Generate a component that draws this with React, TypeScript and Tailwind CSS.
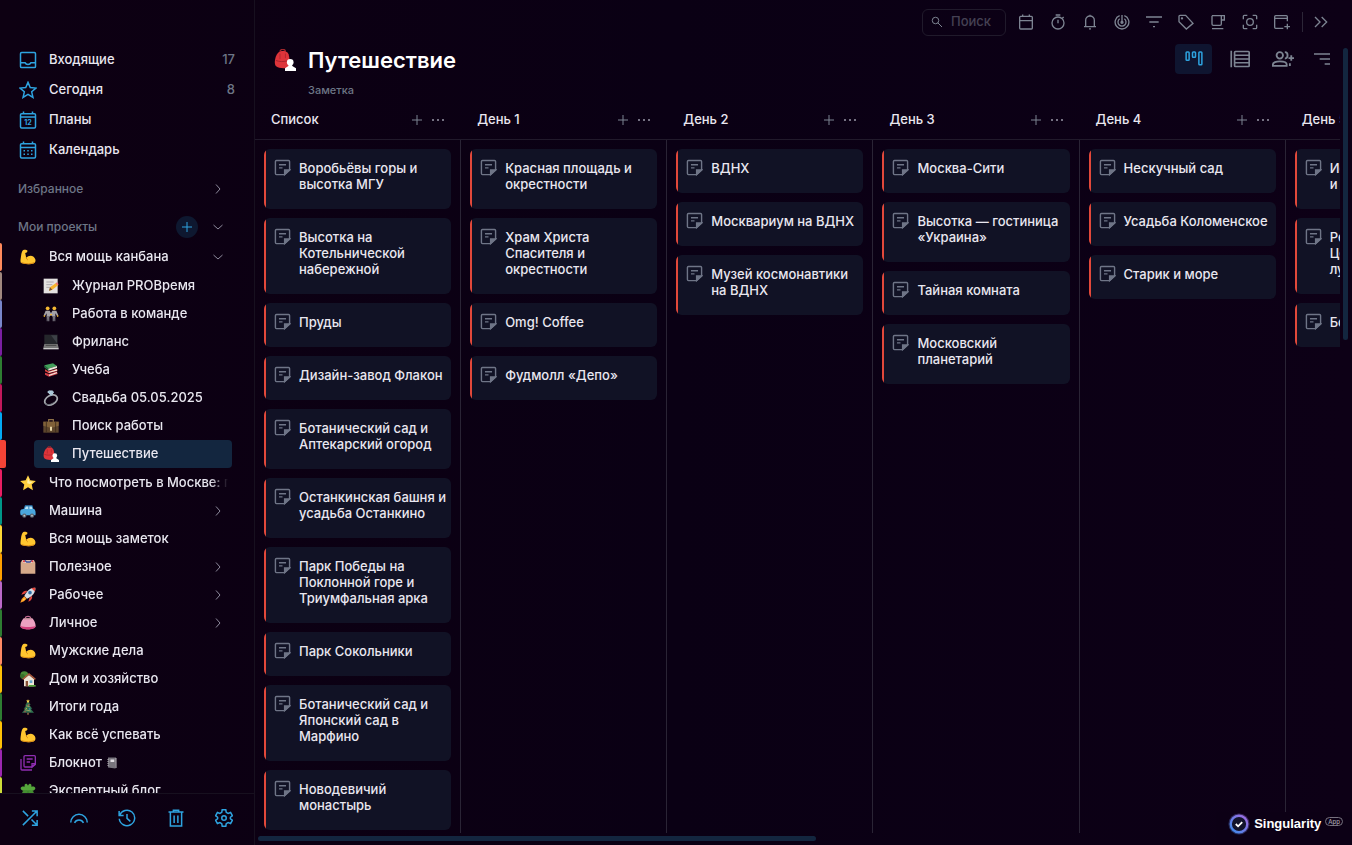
import type { ReactNode } from 'react'
import clsx from 'clsx'

/* ---------- line icons ---------- */

const linePaths: Record<string, ReactNode> = {
  inbox: (
    <>
      <rect x="2" y="2" width="20" height="20" rx="1.5" />
      <path d="M2 15.500h6c.8 1.700 2.200 2.500 4 2.500s3.200-.8 4-2.500h6" />
    </>
  ),
  star: <path d="m12 1.800 3 7 7.600.6-5.700 5 1.700 7.400-6.600-4-6.600 4 1.700-7.400-5.700-5L9 8.800z" />,
  plans: (
    <>
      <rect x="2" y="3.500" width="20" height="19" rx="1.5" />
      <path d="M2 8h20M6 .8v2.700M18 .8v2.700" />
      <text x="12" y="19" textAnchor="middle" fontSize="9.500" fontWeight="700" fill="currentColor" stroke="none">
        12
      </text>
    </>
  ),
  calendar: (
    <>
      <rect x="2" y="3.500" width="20" height="19" rx="1.5" />
      <path d="M2 8.500h20M6 .8v2.700M18 .8v2.700" />
      <path d="M6 13h2M11 13h2M16 13h2M6 17.500h2M11 17.500h2M16 17.500h2" />
    </>
  ),
  right: <path d="m8 3 8 9-8 9" />,
  down: <path d="m3 8 9 8 9-8" />,
  plus: <path d="M12 2v20M2 12h20" />,
  note: (
    <>
      <path d="M22 15.500V3.500A1.500 1.500 0 0 0 20.500 2h-17A1.500 1.500 0 0 0 2 3.500v17A1.500 1.500 0 0 0 3.500 22H15z" />
      <path d="M22 15.500h-7V22z" fill="currentColor" />
      <path d="M7 8h10M7 12.500h5" />
    </>
  ),
  notes: (
    <>
      <path d="M23 14V2.500A1.500 1.500 0 0 0 21.500 1h-14A1.500 1.500 0 0 0 6 2.500v14A1.500 1.500 0 0 0 7.500 18H18z" />
      <path d="M23 13h-5v5zM10 6h9M10 10.500h5M1.500 6v15A1.500 1.500 0 0 0 3 22.500h15" />
    </>
  ),
  shuffle: <path d="M2.500 21.500 21 3M14.500 2.500h7v7M2.500 2.500l7 7M14 14l7 7M14.500 21.500h7v-7" />,
  rainbow: <path d="M1 18a11 11 0 0 1 22 0M6 18.500a6.500 6.500 0 0 1 12 0" />,
  history: <path d="M1.500 2.500v6h6M2.200 8.500A10.300 10.300 0 1 1 1.700 13M12 6.500v6l4.500 4" />,
  trash: <path d="M2 4h20M8.500 4V1.500h7V4M4.500 4v18.500h15V4M9.500 8.500v10M14.500 8.500v10" />,
  gear: (
    <>
      <path d="m9.600 1-.6 3.500-2.500 1.400-3.300-1.200L.8 8.900l2.700 2.100v2L.8 15.100l2.400 4.200 3.300-1.200L9 19.500l.6 3.500h4.800l.6-3.500 2.500-1.400 3.300 1.200 2.400-4.200-2.700-2.100v-2l2.700-2.100-2.400-4.200-3.300 1.200L15 4.500 14.400 1z" />
      <circle cx="12" cy="12" r="3" />
    </>
  ),
  search: (
    <>
      <circle cx="9" cy="9" r="6.500" />
      <path d="m13.500 13.500 8.500 8.500" />
    </>
  ),
  day: (
    <>
      <rect x="2.500" y="3.500" width="19" height="19" rx="1.5" />
      <path d="M2.500 10h19M7 .8v2.700M17 .8v2.700" />
    </>
  ),
  timer: (
    <>
      <circle cx="12" cy="13.500" r="9" />
      <path d="M8.500 1.500h7M12 8.500V14M18.500 6.500l2-2" />
    </>
  ),
  bell: <path d="M3 19h18M5.500 19v-9.500a6.500 6.500 0 0 1 13 0V19M12 3V1M10.500 22.300h3" />,
  pomodoro: (
    <>
      <path d="M12 1.500V12M15.500 2.500a10.300 10.300 0 1 1-7 0" />
      <path d="M15.500 7.200a6 6 0 1 1-7 0" />
      <circle cx="12" cy="12.500" r="1.500" fill="currentColor" />
    </>
  ),
  filter: <path d="M0 4.500h24M5 12h14M10.500 19h3" />,
  tag: (
    <>
      <path d="M1.500 3.500v8l11 11 10-8.500L11.500 2H3a1.500 1.500 0 0 0-1.500 1.500z" />
      <circle cx="6" cy="6.500" r=".8" fill="currentColor" />
    </>
  ),
  cup: <path d="M3 2.500h18.500V9H17M17 2.500V15a2 2 0 0 1-2 2H5a2 2 0 0 1-2-2V2.500M3 22h17" />,
  focus: (
    <>
      <path d="M2 8V3.500A1.500 1.500 0 0 1 3.500 2H8M16 2h4.500A1.500 1.500 0 0 1 22 3.500V8M22 16v4.500a1.500 1.500 0 0 1-1.500 1.500H16M8 22H3.500A1.500 1.500 0 0 1 2 20.500V16" />
      <circle cx="12" cy="12" r="5" />
    </>
  ),
  windowAdd: <path d="M20 11V4a1.500 1.500 0 0 0-1.500-1.500h-16A1.500 1.500 0 0 0 1 4v16a1.500 1.500 0 0 0 1.500 1.500H14M1 6.500h19M20 14.500v8.500M15.500 19H24" />,
  more: <path d="m3 4.500 7.500 7.500L3 19.500M13 4.500l7.500 7.500-7.500 7.500" />,
  kanban: (
    <>
      <rect x="1.500" y="2.500" width="4" height="11" rx="1" />
      <rect x="10" y="2.500" width="4" height="7" rx="1" />
      <rect x="18.500" y="2.500" width="4" height="17" rx="1" />
    </>
  ),
  table: (
    <>
      <rect x="5.500" y="3" width="17.500" height="18" rx="1" />
      <path d="M1.500 2v20M5.500 7.500H23M5.500 12H23M5.500 16.500H23" />
    </>
  ),
  people: (
    <>
      <circle cx="8.500" cy="8" r="3.500" />
      <path d="M1 19.500v-1.700c0-2 3.500-3.300 7.500-3.300s7.500 1.300 7.500 3.300v1.700zM14 4.500c4 0 4 7 0 7M19.500 19.500v-3M18 11h6M21 8v6" />
    </>
  ),
  sort: <path d="M0 4.500h24M8.500 12H24M16 19.500h8" />,
}

function LineIcon({ name, className }: { name: string; className?: string }) {
  return (
    <svg
      viewBox="0 0 24 24"
      fill="none"
      stroke="currentColor"
      strokeWidth="2"
      aria-hidden="true"
      className={clsx('shrink-0', className)}
    >
      {linePaths[name]}
    </svg>
  )
}

/* ---------- colour pictures ---------- */

const pictures: Record<string, ReactNode> = {
  muscle: (
    <>
      <path d="M5 1.500c2-.8 5-.4 6 .8.500 1.200-.4 3.200-2 3.400L7.800 6l1.500 7c3-3.500 8-4 11-1.500 3.500 3 3.700 7 1.700 9-3 2.800-15 3-20.500.3C.2 20 .8 16 1.500 11 2 7 3 2.500 5 1.500z" fill="#ffc62f" />
      <path d="M9.300 13c.4 1.600 1 2.600 2.400 3.400M2 20.500c6 2.200 16 2 20-.3" stroke="#d98a16" strokeWidth="1.500" fill="none" />
    </>
  ),
  memo: (
    <>
      <path d="M1 1h21v22H1z" fill="#e4e2e0" />
      <path d="M5 6h11M5 10h9M5 14h6" stroke="#a3a0a5" strokeWidth="1.300" />
      <path d="m9 19 1.500-5L20 7l3 3.500-9 7z" fill="#f7b52c" />
      <path d="m9 19 1.500-5 3.500 3.500z" fill="#795335" />
      <path d="m19 8 2-1.500 2.500 3-2 1.500z" fill="#ee6e76" />
    </>
  ),
  pair: (
    <>
      <circle cx="7" cy="3.500" r="2.800" fill="#f5b932" />
      <circle cx="17" cy="3.500" r="2.800" fill="#f5b932" />
      <path d="M4 7h6l2 4 2-4h6l3 7-2 1-2.500-4V16h-3.700L12 14l-2.500 2H5.500v-5L3 15l-2-1z" fill="#a5a2a8" />
      <path d="M5.500 15h4v8H7.800L7.500 18 7 23H5.500zM14.500 15h4v8H17l-.5-5-.3 5h-1.700z" fill="#77747e" />
      <path d="m1 14.500 2 1M21 15.500l2-1M10.500 13h3" stroke="#f5b932" strokeWidth="2" />
    </>
  ),
  laptop: (
    <>
      <path d="M2 1h20v14H2z" fill="#24262b" />
      <path d="M12 2h9v12z" fill="#3d4147" />
      <path d="M2 15h20l1.500 6H.5z" fill="#777777" />
      <path d="M.5 21h23v2H.5z" fill="#c8c8c8" />
      <path d="M4 17h16" stroke="#444" strokeWidth="1.500" />
    </>
  ),
  books: (
    <>
      <path d="m2 5 13-3 6 4-13 4z" fill="#43a05b" />
      <path d="m2 5 6 5v3L2 8z" fill="#2a7a45" />
      <path d="m8 10 13-4v3L8 13z" fill="#ece7da" />
      <path d="m3 11 5 3 13-4 1 3-13 4-6-3z" fill="#d8433f" />
      <path d="m8 15 13-4v2L9 16z" fill="#f2e8dc" />
      <path d="m3 16 6 2 12-4 1 4-13 4-6-3z" fill="#d13d46" />
      <path d="m9 19 12-4v2L9 21z" fill="#efe6da" />
    </>
  ),
  ring: (
    <>
      <ellipse cx="12" cy="15" rx="10" ry="6.800" transform="rotate(-28 12 15)" fill="none" stroke="#a5a8ae" strokeWidth="2.600" />
      <path d="M3 20.500c3 3 10 1 14-2.500" fill="none" stroke="#5f646d" strokeWidth="1.300" />
      <path d="M6.500 3 9 .8h5l2.500 2.500L12.500 9z" fill="#c8e2f0" />
      <path d="M6.500 3h10M9 1l3.500 8L14 1" stroke="#7c9db4" strokeWidth=".7" fill="none" />
    </>
  ),
  briefcase: (
    <>
      <path d="M8.500 6V2.500h7V6" fill="none" stroke="#8f7248" strokeWidth="1.800" />
      <path d="M.5 5.500h23V22H.5z" fill="#5c452c" />
      <path d="M.5 5.500h23v6L12 15 .5 11.500z" fill="#806139" />
      <path d="M5 5.500v16M19 5.500v16" stroke="#3a2a1a" strokeWidth="1.200" />
      <path d="M10.500 13h3v6h-3z" fill="#e6d6a6" />
    </>
  ),
  backpack: (
    <>
      <path d="M6.500 3c0-3.500 6-3.500 6 0" fill="none" stroke="#a3272c" strokeWidth="1.400" />
      <path d="M4.500 4C7 1.500 12.500 1.500 15 4c2 2.500 2.500 11 1.500 15.500-2 2-11.500 2-14.500-1C-.5 15 1.500 7 4.500 4z" fill="#dd343a" />
      <path d="M2 12.500c4 1.500 8 1.500 12 .5" fill="none" stroke="#a3222b" strokeWidth="1" />
      <path d="M6.500 5v6M12.500 5v5" fill="none" stroke="#b0262e" strokeWidth="1" />
      <circle cx="17.700" cy="14.500" r="3.600" fill="#fff" />
      <path d="M16 16h3.500l.5 2.500 4 2.500v3H12v-3l3.700-2.500z" fill="#fff" />
    </>
  ),
  gold: (
    <>
      <path d="m12 .3 3.500 7.700 8.300.9-6.200 5.500 1.800 8.300L12 18.500l-7.400 4.200 1.800-8.300L.2 8.900 8.500 8z" fill="#ffcf3e" />
      <path d="m12 3 1.700 6.500 6 .5-5 3.500-4-1z" fill="#fff0a2" />
    </>
  ),
  car: (
    <>
      <path d="M5 10 7.500 3.500h11l2 6.500z" fill="#2f82bd" />
      <path d="M7 9.500 8.800 5.200h3.700v4.300zM14 5.200h3.500L19 9.500h-5z" fill="#b7e0f2" />
      <path d="M.8 11c1-2 4-2 6.200-2h14c2 1 3 5 2.200 9.500H1.200C0 16 0 13 .8 11z" fill="#4aa6dd" />
      <circle cx="6.500" cy="19" r="3.200" fill="#5a6470" />
      <circle cx="18" cy="19" r="3.200" fill="#5a6470" />
      <circle cx="6.500" cy="19" r="1.300" fill="#c4c9cd" />
      <circle cx="18" cy="19" r="1.300" fill="#c4c9cd" />
    </>
  ),
  bag: (
    <>
      <path d="M1 5.500 3 2h18l2 3.500V22H1z" fill="#d6a98a" />
      <path d="M3 2h18l-1.500 4h-15z" fill="#edd6c6" />
      <path d="m7 2 3 2.500h5L18 2" stroke="#384a99" strokeWidth="2" fill="none" />
      <circle cx="6" cy="3.500" r="1.600" fill="#dd3d43" />
      <circle cx="18.500" cy="3.500" r="1.600" fill="#dd3d43" />
    </>
  ),
  rocket: (
    <>
      <path d="m7 10 4-4c-4-1-7 1-9 5.500zM14 17l4-4c1 4-1 7-5.500 9z" fill="#e5473f" />
      <path d="M23 1C16 .5 10 5.500 6.500 13.500l4 4C18.500 14 23.500 8 23 1z" fill="#d6dce3" />
      <path d="M23 1c.2 2 0 4-.7 5.900l-5.200-5.200C19 1 21 .9 23 1z" fill="#e5473f" />
      <circle cx="15" cy="8.500" r="2.700" fill="#2e6fa9" />
      <path d="m6.500 14 3.500 3.500-4 4-5.500 2 2-5.500z" fill="#ff9a22" />
      <path d="m6 17 1.500 1.500-4 2.500z" fill="#ffec65" />
    </>
  ),
  purse: (
    <>
      <path d="M8 5c0-4 8-4 8 0" fill="none" stroke="#c06a91" strokeWidth="1.800" />
      <path d="M5.500 5h13c3 3 5 8 5 12-1 6-22 6-23 0 0-4 2-9 5-12z" fill="#eda1c2" />
      <path d="M.5 16.500c6 2 17 2 23 0 0 7-23 7-23 0z" fill="#d3407e" />
      <path d="M6 5.500h12" stroke="#bd8892" strokeWidth="2" />
    </>
  ),
  house: (
    <>
      <circle cx="6.500" cy="6.500" r="6" fill="#4a8b37" />
      <circle cx="3.800" cy="8" r="3.500" fill="#376f2a" />
      <path d="M6 12v11h15V12l-7.500-6z" fill="#eee6d8" />
      <path d="m4 12.500 9.500-8 9.500 8" fill="none" stroke="#aa5a3d" strokeWidth="2.200" />
      <path d="M8.500 15h3.500v8H8.500z" fill="#875034" />
      <path d="M14.500 14h4v4h-4z" fill="#65a7ce" />
      <path d="M13 21h10.500v2.500H13z" fill="#55a23a" />
    </>
  ),
  tree: (
    <>
      <path d="m12 3 4 6h-2l4.500 5.500H16l5 6H3l5-6H5.500L10 9H8z" fill="#2f7050" />
      <path d="M10.500 20.500h3V23.500h-3z" fill="#77523a" />
      <path d="m12 .3.900 1.900 2 .2-1.500 1.400.4 2-1.800-1-1.800 1 .4-2L9.100 2.400l2-.2z" fill="#f5ce4c" />
      <path d="m8.500 10 6 1.500M7 16l9 2" stroke="#c7ba69" />
      <circle cx="13" cy="9" r="1" fill="#d44" />
      <circle cx="9.500" cy="14" r="1" fill="#e5b53c" />
      <circle cx="14.500" cy="15" r="1" fill="#4896cc" />
      <circle cx="7.500" cy="19" r="1" fill="#d44" />
    </>
  ),
  clover: (
    <>
      <path d="M12 12C8 13 1 11.500 1 8s4.500-3 6-2.500C6 1 10-.5 12 4c2-4.500 6-3 5 1.500 1.500-.5 6-1 6 2.500s-7 5-11 4z" fill="#55a63b" />
      <path d="M12 11c-5-2-10 2-8.500 5 1 2.500 4 2 4.500 1 0 4 4 4 4 0 0 4 4 4 4 0 .5 1 3.500 1.500 4.500-1C22 13 17 9 12 11z" fill="#448e31" />
      <path d="M12 12v11" stroke="#397a2c" strokeWidth="1.500" />
    </>
  ),
  notebook: (
    <>
      <path d="M4 1h16l-1 22-15-2z" fill="#77747c" />
      <path d="M9 5h7.500v5H9z" fill="#e0dde2" />
      <path d="M20 2v20" stroke="#bbb7bd" strokeWidth="2" />
      <path d="M2.500 5h3M2.500 9h3M2.500 13h3M2.500 17h3" stroke="#c7c4cb" strokeWidth="1.200" />
    </>
  ),
}

function Picture({ name, className }: { name: string; className?: string }) {
  return (
    <svg viewBox="0 0 24 24" aria-hidden="true" className={clsx('shrink-0', className)}>
      {pictures[name]}
    </svg>
  )
}

/* ---------- data ---------- */

const navItems = [
  { icon: 'inbox', label: 'Входящие', count: 17 },
  { icon: 'star', label: 'Сегодня', count: 8 },
  { icon: 'plans', label: 'Планы' },
  { icon: 'calendar', label: 'Календарь' },
]

type Project = {
  icon: string
  label: string
  strip: string
  arrow?: 'right' | 'down'
  active?: boolean
}

const kanbanProject: Project = { icon: 'muscle', label: 'Вся мощь канбана', strip: 'bg-[#ff8a5c]', arrow: 'down' }

const kanbanChildren: Project[] = [
  { icon: 'memo', label: 'Журнал PROВремя', strip: 'bg-[#a1887f]' },
  { icon: 'pair', label: 'Работа в команде', strip: 'bg-[#7986cb]' },
  { icon: 'laptop', label: 'Фриланс', strip: 'bg-[#7b1fa2]' },
  { icon: 'books', label: 'Учеба', strip: 'bg-[#2e7d32]' },
  { icon: 'ring', label: 'Свадьба 05.05.2025', strip: 'bg-[#c2185b]' },
  { icon: 'briefcase', label: 'Поиск работы', strip: 'bg-[#03a9f4]' },
  { icon: 'backpack', label: 'Путешествие', strip: 'bg-[#f44336]', active: true },
]

const projects: Project[] = [
  { icon: 'gold', label: 'Что посмотреть в Москве: г', strip: 'bg-[#e91e63]' },
  { icon: 'car', label: 'Машина', strip: 'bg-[#009688]', arrow: 'right' },
  { icon: 'muscle', label: 'Вся мощь заметок', strip: 'bg-[#fdd835]' },
  { icon: 'bag', label: 'Полезное', strip: 'bg-[#ffa000]', arrow: 'right' },
  { icon: 'rocket', label: 'Рабочее', strip: 'bg-[#ba68c8]', arrow: 'right' },
  { icon: 'purse', label: 'Личное', strip: 'bg-[#2e7d32]', arrow: 'right' },
  { icon: 'muscle', label: 'Мужские дела', strip: 'bg-[#ff8a65]' },
  { icon: 'house', label: 'Дом и хозяйство', strip: 'bg-[#ffc107]' },
  { icon: 'tree', label: 'Итоги года', strip: 'bg-[#2e7d32]' },
  { icon: 'muscle', label: 'Как всё успевать', strip: 'bg-[#ffc107]' },
  { icon: 'notes', label: 'Блокнот', strip: 'bg-[#9c27b0]' },
  { icon: 'clover', label: 'Экспертный блог', strip: 'bg-[#cddc39]' },
]

const footerItems = [
  { icon: 'shuffle', label: 'Перемешать' },
  { icon: 'rainbow', label: 'Привычки' },
  { icon: 'history', label: 'История' },
  { icon: 'trash', label: 'Корзина' },
  { icon: 'gear', label: 'Настройки' },
]

const tools = [
  { icon: 'day', label: 'Дата' },
  { icon: 'timer', label: 'Таймер' },
  { icon: 'bell', label: 'Уведомления' },
  { icon: 'pomodoro', label: 'Помодоро' },
  { icon: 'filter', label: 'Фильтр' },
  { icon: 'tag', label: 'Метки' },
  { icon: 'cup', label: 'Перерыв' },
  { icon: 'focus', label: 'Фокус' },
  { icon: 'windowAdd', label: 'Новое окно' },
]

const columns = [
  {
    title: 'Список',
    cards: [
      'Воробьёвы горы и высотка МГУ',
      'Высотка на Котельнической набережной',
      'Пруды',
      'Дизайн-завод Флакон',
      'Ботанический сад и Аптекарский огород',
      'Останкинская башня и усадьба Останкино',
      'Парк Победы на Поклонной горе и Триумфальная арка',
      'Парк Сокольники',
      'Ботанический сад и Японский сад в Марфино',
      'Новодевичий монастырь',
    ],
  },
  {
    title: 'День 1',
    cards: ['Красная площадь и окрестности', 'Храм Христа Спасителя и окрестности', 'Omg! Coffee', 'Фудмолл «Депо»'],
  },
  {
    title: 'День 2',
    cards: ['ВДНХ', 'Москвариум на ВДНХ', 'Музей космонавтики на ВДНХ'],
  },
  {
    title: 'День 3',
    cards: ['Москва-Сити', 'Высотка — гостиница «Украина»', 'Тайная комната', 'Московский планетарий'],
  },
  {
    title: 'День 4',
    cards: ['Нескучный сад', 'Усадьба Коломенское', 'Старик и море'],
  },
  {
    title: 'День 5',
    cards: ['Исторический квартал и усадьба', 'Рестораны около Центрального рынка лучшие', 'Большой театр'],
  },
]

/* ---------- sidebar ---------- */

function ProjectRow({ project, nested }: { project: Project; nested?: boolean }) {
  return (
    <li className="relative flex h-7 shrink-0">
      <span
        className={clsx('absolute left-0 top-0 h-full rounded-r-xs', project.strip, project.active ? 'w-1.5' : 'w-0.5')}
      />
      <button
        type="button"
        className={clsx(
          'mr-[22px] flex min-w-0 flex-1 items-center gap-[13px] rounded text-left',
          nested ? 'ml-[34px] pl-[9px]' : 'ml-5',
          project.active && 'bg-[#13263f]',
        )}
      >
        {project.icon === 'notes' ? (
          <LineIcon name="notes" className="size-4 text-[#8e2db0]" />
        ) : (
          <Picture name={project.icon} className="size-4" />
        )}
        <span className="mr-1 flex min-w-0 flex-1 items-center gap-1 overflow-hidden whitespace-nowrap mask-r-from-90%">
          {project.label}
          {project.icon === 'notes' && <Picture name="notebook" className="size-3" />}
        </span>
        {project.arrow && <LineIcon name={project.arrow} className="mr-2 size-3 text-[#8d8a9c]" />}
      </button>
    </li>
  )
}

function Sidebar() {
  return (
    <aside className="flex w-[255px] shrink-0 flex-col border-r border-[#17101f] pt-[45px]">
      <nav>
        {navItems.map(item => (
          <a key={item.label} href="#" className="flex h-[30px] items-center gap-3 px-[19px]">
            <LineIcon name={item.icon} className="size-[18px] text-[#2ea3e0]" />
            <span className="flex-1">{item.label}</span>
            <span className="text-[#6d7686]">{item.count}</span>
          </a>
        ))}
      </nav>

      <button type="button" className="mt-[7px] flex h-[34px] items-center pl-[18px] pr-[30px] text-xs text-[#6d7686]">
        <span className="flex-1 text-left">Избранное</span>
        <LineIcon name="right" className="size-3 text-[#8d8a9c]" />
      </button>

      <div className="mt-[7px] flex h-7 shrink-0 items-center pl-[18px] pr-[30px] text-xs text-[#6d7686]">
        <h2 className="flex-1">Мои проекты</h2>
        <button
          type="button"
          aria-label="Добавить проект"
          className="mr-[14px] flex size-[22px] items-center justify-center rounded-full bg-[#0e1830] text-[#2ea3e0]"
        >
          <LineIcon name="plus" className="size-3" />
        </button>
        <button type="button" aria-label="Свернуть проекты">
          <LineIcon name="down" className="size-3 text-[#8d8a9c]" />
        </button>
      </div>

      <ul className="flex min-h-0 flex-1 flex-col overflow-hidden pt-0.5">
        <ProjectRow project={kanbanProject} />
        <li className="my-px shrink-0">
          <ul>
            {kanbanChildren.map(project => (
              <ProjectRow key={project.label} project={project} nested />
            ))}
          </ul>
        </li>
        {projects.map(project => (
          <ProjectRow key={project.label} project={project} />
        ))}
      </ul>

      <footer className="flex h-[52px] shrink-0 items-center justify-between border-t border-[#17101f] px-[21px] pb-[3px]">
        {footerItems.map(item => (
          <button key={item.label} type="button" aria-label={item.label}>
            <LineIcon name={item.icon} className="size-[18px] text-[#2ea3e0]" />
          </button>
        ))}
      </footer>
    </aside>
  )
}

/* ---------- main area ---------- */

function Toolbar() {
  return (
    <div className="flex h-11 items-center justify-end pr-[23px] text-[#7d8492]">
      <label className="mr-1 flex h-[27px] w-[84px] items-center gap-2 rounded-md border border-[#201a2b] pl-2">
        <LineIcon name="search" className="size-3" />
        <input
          type="text"
          placeholder="Поиск"
          aria-label="Поиск"
          className="w-full min-w-0 bg-transparent outline-none placeholder:text-[#454153]"
        />
      </label>
      {tools.map(tool => (
        <button key={tool.label} type="button" aria-label={tool.label} className="flex w-8 justify-center">
          <LineIcon name={tool.icon} className="size-4" />
        </button>
      ))}
      <span className="ml-1 mr-2.5 h-5 w-px bg-[#2c2637]" />
      <button type="button" aria-label="Ещё">
        <LineIcon name="more" className="size-4" />
      </button>
    </div>
  )
}

function ProjectHeader() {
  return (
    <header className="flex h-[60px] items-start pl-[19px] pr-[22px]">
      <Picture name="backpack" className="mt-[5px] size-[22px]" />
      <div className="ml-3 flex-1">
        <h1 className="text-[22px] font-semibold leading-8 text-white">Путешествие</h1>
        <p className="mt-1.5 text-[11px] leading-4 text-[#6d7686]">Заметка</p>
      </div>
      <div className="flex h-[30px] items-center text-[#7d8492]">
        <button
          type="button"
          aria-label="Канбан"
          className="flex h-[30px] w-[37px] items-center justify-center rounded bg-[#0f1530] text-[#2ea3e0]"
        >
          <LineIcon name="kanban" className="size-[18px]" />
        </button>
        <button type="button" aria-label="Таблица" className="ml-[18px]">
          <LineIcon name="table" className="size-5" />
        </button>
        <button type="button" aria-label="Участники" className="ml-[22px]">
          <LineIcon name="people" className="size-[22px]" />
        </button>
        <button type="button" aria-label="Сортировка" className="ml-5">
          <LineIcon name="sort" className="size-4" />
        </button>
      </div>
    </header>
  )
}

function Card({ title }: { title: string }) {
  return (
    <article className="flex overflow-hidden rounded-md bg-[#111225]">
      <span className="w-0.5 shrink-0 bg-[#e2483a]" />
      <div className="flex min-w-0 flex-1 items-start gap-2 pb-[17px] pl-2 pr-1 pt-[11px]">
        <LineIcon name="note" className="-my-px size-[17px] text-[#6f7587]" />
        <h3 className="min-w-0 flex-1 leading-4">{title}</h3>
      </div>
    </article>
  )
}

function Board() {
  return (
    <div className="mr-3 grid min-h-0 flex-1 grid-cols-[repeat(6,19%)] overflow-hidden">
      {columns.map(column => (
        <section key={column.title} className="flex min-h-0 flex-col">
          <div className="flex h-9 shrink-0 items-center border-b border-[#211a2b] px-4 pb-1">
            <h2 className="flex-1 whitespace-nowrap">{column.title}</h2>
            <button type="button" aria-label="Добавить карточку" className="text-[#7d8492]">
              <LineIcon name="plus" className="size-3" />
            </button>
            <button type="button" aria-label="Меню колонки" className="ml-2 flex w-3.5 justify-center gap-[3px]">
              <span className="size-0.5 rounded-full bg-[#9a99a8]" />
              <span className="size-0.5 rounded-full bg-[#9a99a8]" />
              <span className="size-0.5 rounded-full bg-[#9a99a8]" />
            </button>
          </div>
          <div className="flex min-h-0 flex-1 flex-col gap-[9px] overflow-hidden border-r border-[#2a2435] px-[9px] pt-[9px]">
            {column.cards.map(card => (
              <Card key={card} title={card} />
            ))}
          </div>
        </section>
      ))}
    </div>
  )
}

function Brand() {
  return (
    <div className="absolute bottom-0 right-0 flex h-[33px] items-center bg-[#0c0015] pb-[10px] pl-3 pr-[9px]">
      <svg viewBox="0 0 24 24" aria-hidden="true" className="size-[22px]">
        <defs>
          <linearGradient id="brand" x1="0" y1="1" x2="1" y2="0">
            <stop offset="0" stopColor="#3a8bea" />
            <stop offset="1" stopColor="#a56ae0" />
          </linearGradient>
        </defs>
        <circle cx="12" cy="12" r="11.500" fill="url(#brand)" opacity=".35" />
        <circle cx="12" cy="12" r="9" fill="#12132c" stroke="url(#brand)" strokeWidth="2.500" />
        <path d="m8.500 12 2.500 2.500 4.500-4.500" fill="none" stroke="#fff" strokeWidth="2" />
      </svg>
      <span className="ml-1 font-['Liberation_Sans',sans-serif] text-[13px] font-bold text-white">Singularity</span>
      <span className="mb-1 ml-1 rounded-full border border-[#77727f] px-0.5 text-[6px] leading-[7px] text-[#a5a1ae]">
        App
      </span>
    </div>
  )
}

export default function App() {
  return (
    <div className="flex h-screen overflow-hidden bg-linear-to-r from-[#0d0012] via-[#0a0014] to-[#0d0016] font-['Inter','Noto_Sans',sans-serif] text-[13px] font-medium text-[#e9e7f0]">
      <Sidebar />
      <main className="relative flex min-w-0 flex-1 flex-col">
        <Toolbar />
        <ProjectHeader />
        <Board />
        <div className="flex h-3 shrink-0 items-center pb-px pl-[3px]">
          <div className="h-[5px] w-[51%] rounded-full bg-[#13263f]" />
        </div>
        <Brand />
        <div className="absolute right-1 top-12 h-[292px] w-[5px] rounded-full bg-[#13263f]" />
      </main>
    </div>
  )
}
